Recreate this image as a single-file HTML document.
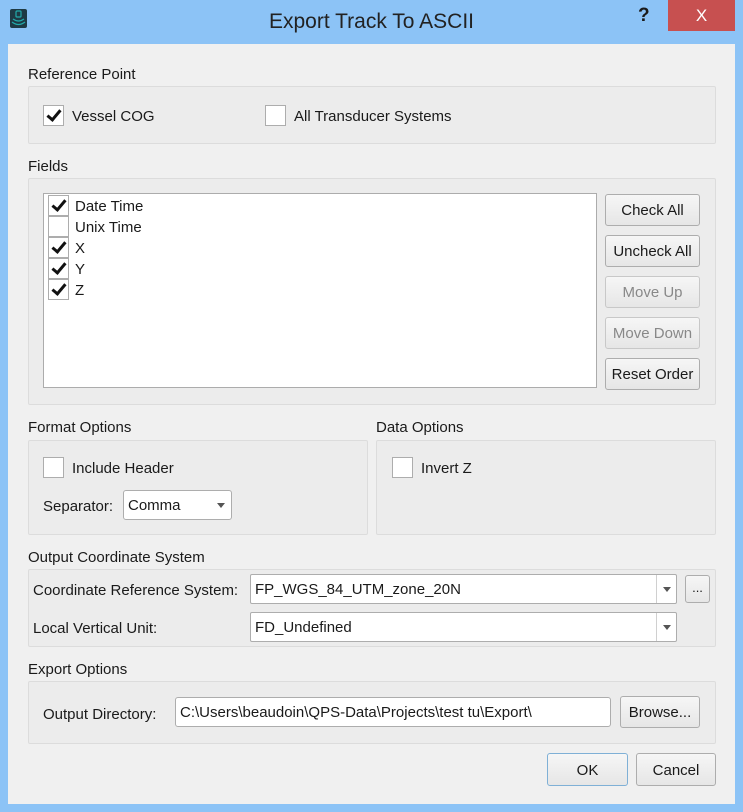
<!DOCTYPE html><html><head><style>
*{box-sizing:border-box;margin:0;padding:0}
body{width:743px;height:812px;background:#8cc3f6;font-family:"Liberation Sans",sans-serif;font-size:15px;color:#1a1a1a;position:relative;overflow:hidden}
.a{position:absolute}
.c{position:absolute;left:8px;top:44px;width:727px;height:760px;background:#f0f0f0}
.g{position:absolute;border:1px solid #dcdcdc;background:#ececec;border-radius:2px}
.cb{position:absolute;width:21px;height:21px;background:#fff;border:1px solid #adadad}
.cb.k::after{content:"";position:absolute;left:6px;top:1px;width:5px;height:11px;border:solid #111;border-width:0 3px 3px 0;transform:rotate(40deg)}
.btn{position:absolute;background:linear-gradient(#f6f6f6,#e6e6e6);border:1px solid #adadad;border-radius:3px;text-align:center;font-size:15px}
.dis{color:#888;border-color:#c8c8c8}
.cmb{position:absolute;background:#fff;border:1px solid #adadad;border-radius:2px;padding-left:4px}
.arr{position:absolute;right:0;top:0;bottom:0;width:20px;border-left:1px solid #d0d0d0}
.arr::after{content:"";position:absolute;left:6px;top:50%;margin-top:-2px;border:4px solid transparent;border-top:5px solid #555}
</style></head><body>
<div class="a" style="left:10px;top:9px;width:17px;height:19px;background:#1e3a44;border-radius:2px;overflow:hidden">
<svg width="17" height="19"><rect x="6" y="2" width="5" height="6" rx="1" fill="none" stroke="#2aa" stroke-width="1.2"/><path d="M3 10 Q8.5 14 14 10 M2 13 Q8.5 18 15 13" fill="none" stroke="#2aa" stroke-width="1.2"/></svg></div>
<div class="a" style="left:0;width:743px;top:10px;text-align:center;font-size:21px;color:#222">Export Track To ASCII</div>
<div class="a" style="left:638px;top:5px;font-size:19px;font-weight:bold">?</div>
<div class="a" style="left:668px;top:0;width:67px;height:31px;background:#c75050;color:#fff;text-align:center;font-size:17px;line-height:31px">X</div>
<div class="c"></div>

<div class="a" style="left:28px;top:66px">Reference Point</div>
<div class="g" style="left:28px;top:86px;width:688px;height:58px"></div>
<div class="cb k" style="left:43px;top:105px"></div><div class="a" style="left:72px;top:108px">Vessel COG</div>
<div class="cb" style="left:265px;top:105px"></div><div class="a" style="left:294px;top:108px">All Transducer Systems</div>

<div class="a" style="left:28px;top:158px">Fields</div>
<div class="g" style="left:28px;top:178px;width:688px;height:227px"></div>
<div class="a" style="left:43px;top:193px;width:554px;height:195px;background:#fff;border:1px solid #acacac"></div>
<div class="cb k" style="left:48px;top:195px"></div><div class="a" style="left:75px;top:198px">Date Time</div>
<div class="cb" style="left:48px;top:216px"></div><div class="a" style="left:75px;top:219px">Unix Time</div>
<div class="cb k" style="left:48px;top:237px"></div><div class="a" style="left:75px;top:240px">X</div>
<div class="cb k" style="left:48px;top:258px"></div><div class="a" style="left:75px;top:261px">Y</div>
<div class="cb k" style="left:48px;top:279px"></div><div class="a" style="left:75px;top:282px">Z</div>
<div class="btn" style="left:605px;top:194px;width:95px;height:32px;line-height:32px">Check All</div>
<div class="btn" style="left:605px;top:235px;width:95px;height:32px;line-height:32px">Uncheck All</div>
<div class="btn dis" style="left:605px;top:276px;width:95px;height:32px;line-height:32px">Move Up</div>
<div class="btn dis" style="left:605px;top:317px;width:95px;height:32px;line-height:32px">Move Down</div>
<div class="btn" style="left:605px;top:358px;width:95px;height:32px;line-height:32px">Reset Order</div>

<div class="a" style="left:28px;top:419px">Format Options</div>
<div class="g" style="left:28px;top:440px;width:340px;height:95px"></div>
<div class="cb" style="left:43px;top:457px"></div><div class="a" style="left:72px;top:460px">Include Header</div>
<div class="a" style="left:43px;top:498px">Separator:</div>
<div class="cmb" style="left:123px;top:490px;width:109px;height:30px;line-height:30px;border-radius:3px">Comma<span style="position:absolute;right:6px;top:12px;border:4px solid transparent;border-top:5px solid #555"></span></div>
<div class="a" style="left:376px;top:419px">Data Options</div>
<div class="g" style="left:376px;top:440px;width:340px;height:95px"></div>
<div class="cb" style="left:392px;top:457px"></div><div class="a" style="left:421px;top:460px">Invert Z</div>

<div class="a" style="left:28px;top:549px">Output Coordinate System</div>
<div class="g" style="left:28px;top:569px;width:688px;height:78px"></div>
<div class="a" style="left:33px;top:582px">Coordinate Reference System:</div>
<div class="cmb" style="left:250px;top:574px;width:427px;height:30px;line-height:30px">FP_WGS_84_UTM_zone_20N<div class="arr"></div></div>
<div class="btn" style="left:685px;top:575px;width:25px;height:28px;line-height:24px;font-size:13px">...</div>
<div class="a" style="left:33px;top:620px">Local Vertical Unit:</div>
<div class="cmb" style="left:250px;top:612px;width:427px;height:30px;line-height:30px">FD_Undefined<div class="arr"></div></div>

<div class="a" style="left:28px;top:661px">Export Options</div>
<div class="g" style="left:28px;top:681px;width:688px;height:63px"></div>
<div class="a" style="left:43px;top:706px">Output Directory:</div>
<div class="cmb" style="left:175px;top:697px;width:436px;height:30px;line-height:30px;border-radius:3px">C:\Users\beaudoin\QPS-Data\Projects\test tu\Export\</div>
<div class="btn" style="left:620px;top:696px;width:80px;height:32px;line-height:32px">Browse...</div>

<div class="btn" style="left:547px;top:753px;width:81px;height:33px;line-height:33px;border-color:#7fb0d6">OK</div>
<div class="btn" style="left:636px;top:753px;width:80px;height:33px;line-height:33px">Cancel</div>
</body></html>
